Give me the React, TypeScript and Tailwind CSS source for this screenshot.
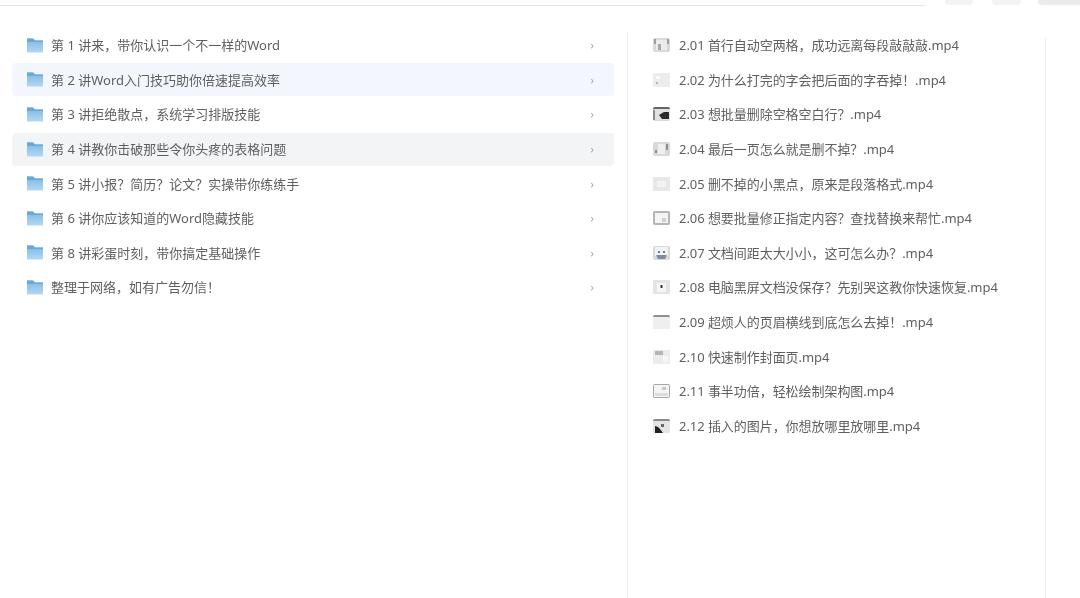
import React from "react";

const folders = [
  { name: "第 1 讲来，带你认识一个不一样的Word" },
  { name: "第 2 讲Word入门技巧助你倍速提高效率", bg: "bg-[#f3f6fd]" },
  { name: "第 3 讲拒绝散点，系统学习排版技能" },
  { name: "第 4 讲教你击破那些令你头疼的表格问题", bg: "bg-[#f3f4f6]" },
  { name: "第 5 讲小报？简历？论文？实操带你练练手" },
  { name: "第 6 讲你应该知道的Word隐藏技能" },
  { name: "第 8 讲彩蛋时刻，带你搞定基础操作" },
  { name: "整理于网络，如有广告勿信！" },
];

const videos = [
  "2.01 首行自动空两格，成功远离每段敲敲敲.mp4",
  "2.02 为什么打完的字会把后面的字吞掉！.mp4",
  "2.03 想批量删除空格空白行？.mp4",
  "2.04 最后一页怎么就是删不掉？.mp4",
  "2.05 删不掉的小黑点，原来是段落格式.mp4",
  "2.06 想要批量修正指定内容？查找替换来帮忙.mp4",
  "2.07 文档间距太大小小，这可怎么办？.mp4",
  "2.08 电脑黑屏文档没保存？先别哭这教你快速恢复.mp4",
  "2.09 超烦人的页眉横线到底怎么去掉！.mp4",
  "2.10 快速制作封面页.mp4",
  "2.11 事半功倍，轻松绘制架构图.mp4",
  "2.12 插入的图片，你想放哪里放哪里.mp4",
];

const Folder = () => (
  <svg width="16" height="15" viewBox="0 0 16 15" className="shrink-0">
    <defs>
      <linearGradient id="fold" x1="0" y1="0" x2="0" y2="1">
        <stop offset="0" stopColor="#7db6e2" />
        <stop offset="1" stopColor="#b4d8f2" />
      </linearGradient>
    </defs>
    <path d="M0 0.5h6l2 2h8v12H0z" fill="url(#fold)" />
    <path d="M0 0.5h6l2 2h8v1.5H0z" fill="#6aa8d8" />
  </svg>
);

// tiny video thumbnails, each one a little different
const Thumb = ({ i }: { i: number }) => {
  const marks: React.ReactNode[] = [
    <>
      <rect x="3" y="2" width="11" height="10" fill="#ececec" />
      <rect x="5" y="6" width="3" height="6" fill="#a8a8a8" />
      <rect x="1" y="1" width="2" height="5" fill="#9f9f9f" />
      <rect x="14" y="1" width="2" height="5" fill="#9f9f9f" />
    </>,
    <>
      <rect x="0" y="0" width="17" height="14" fill="#ececec" />
      <rect x="3" y="3" width="4" height="3" fill="#fafafa" />
      <rect x="3" y="9" width="2" height="2" fill="#b5b5b5" />
    </>,
    <>
      <rect x="0" y="0" width="17" height="2" fill="#666" />
      <rect x="2" y="2" width="15" height="11" fill="#e2e2e2" />
      <path d="M6 8l5-3h5v7H9z" fill="#2a2a2a" />
      <rect x="0" y="3" width="2" height="10" fill="#8a8a8a" />
    </>,
    <>
      <rect x="5" y="2" width="7" height="10" fill="#efefef" />
      <rect x="13" y="2" width="2" height="6" fill="#8e8e8e" />
      <rect x="2" y="8" width="2" height="3" fill="#8e8e8e" />
    </>,
    <>
      <rect x="0" y="0" width="17" height="14" fill="#e8e8e8" />
      <rect x="4" y="4" width="9" height="6" fill="#f3f3f3" />
    </>,
    <>
      <rect x="0" y="0" width="17" height="14" fill="#b5b5b5" />
      <rect x="2" y="2" width="13" height="10" fill="#f4f4f4" />
      <rect x="9" y="7" width="4" height="4" fill="#d0d0d0" />
    </>,
    <>
      <rect x="2" y="1" width="13" height="9" fill="#f0f2f5" />
      <path d="M3 9h11l-2 4H5z" fill="#7d8ea3" />
      <rect x="5" y="5" width="2" height="2" fill="#6d7f94" />
      <rect x="10" y="5" width="2" height="2" fill="#6d7f94" />
    </>,
    <>
      <rect x="0" y="0" width="17" height="14" fill="#e4e4e4" />
      <rect x="4" y="3" width="9" height="9" fill="#f6f6f6" />
      <rect x="7.5" y="5" width="2" height="3" fill="#333" />
    </>,
    <>
      <rect x="0" y="0" width="17" height="2" fill="#8f8f8f" />
      <rect x="0" y="2" width="17" height="12" fill="#efefef" />
    </>,
    <>
      <rect x="0" y="0" width="17" height="14" fill="#ececec" />
      <rect x="2" y="1" width="8" height="4" fill="#b5b5b5" />
      <rect x="10" y="6" width="5" height="6" fill="#f7f7f7" />
    </>,
    <>
      <rect x="0.5" y="0.5" width="16" height="13" fill="#f4f4f4" stroke="#a9a9a9" />
      <rect x="2" y="9" width="13" height="3" fill="#dddddd" />
      <rect x="9" y="3" width="4" height="3" fill="#c8c8c8" />
    </>,
    <>
      <rect x="0" y="0" width="17" height="2" fill="#8a8a8a" />
      <rect x="0" y="2" width="17" height="12" fill="#e4e4e4" />
      <path d="M2 14V7l3 1 2 2 3 4z" fill="#222" />
      <rect x="8" y="5" width="3" height="3" fill="#666" />
    </>,
  ];
  return (
    <svg width="17" height="14" viewBox="0 0 17 14" className="shrink-0 rounded-[2px]">
      <rect width="17" height="14" fill="#d9d9d9" />
      {marks[i]}
    </svg>
  );
};

const App = () => {
  return (
    <div className="w-[1080px] h-[598px] overflow-hidden bg-white text-[13px] leading-5 text-[#5f5f5f] blur-[0.5px] font-['Noto_Sans','Noto_Sans_CJK_SC',sans-serif]">
      <div className="flex h-[6px] items-start">
        <div className="w-[925px] h-[6px] border-b border-[#e8e8e8]"></div>
        <div className="ml-5 w-[28px] h-[5px] rounded-b bg-[#f3f3f3]"></div>
        <div className="ml-[19px] w-[29px] h-[5px] rounded-b bg-[#f3f3f3]"></div>
        <div className="ml-[17px] w-[42px] h-[5px] rounded-bl bg-[#ececec]"></div>
      </div>
      <div className="flex h-[592px]">
        <div className="w-[627px] pl-3 pr-[13px] pt-[22px] shrink-0">
          {folders.map((f) => (
            <div key={f.name} className="h-[34.6px] flex items-center">
              <div className={`w-full h-[33px] flex items-center pl-[15px] pr-[20px] rounded ${f.bg ?? ""}`}>
                <Folder />
                <span className="ml-2 flex-1">{f.name}</span>
                <span className="text-[11px] text-[#a5a5a5]">›</span>
              </div>
            </div>
          ))}
        </div>
        <div className="w-px mt-[26px] bg-[#ececec] shrink-0"></div>
        <div className="w-[417px] shrink-0 pl-[25px] pt-[22px]">
          {videos.map((v, i) => (
            <div key={v} className="h-[34.6px] flex items-center gap-[9px]">
              <Thumb i={i} />
              <span className="whitespace-nowrap tracking-[-0.05px]">{v}</span>
            </div>
          ))}
        </div>
        <div className="w-px mt-[32px] bg-[#f0f0f0] shrink-0"></div>
      </div>
    </div>
  );
};

export default App;
